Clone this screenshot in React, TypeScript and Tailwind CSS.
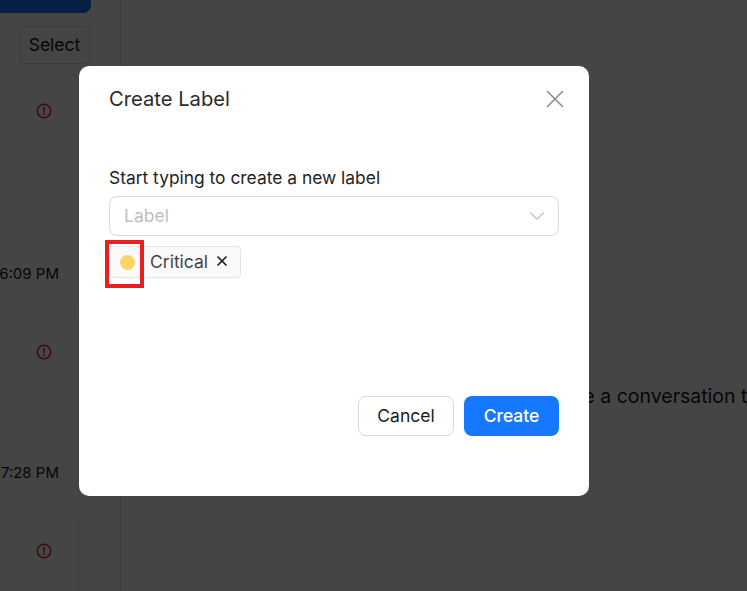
import { ChevronDown, X } from "lucide-react";

function AlertIcon() {
  return (
    <svg width="16" height="16" viewBox="0 0 16 16" fill="none" className="text-[#dc2626]" aria-hidden>
      <circle cx="8" cy="8" r="6.75" stroke="currentColor" strokeWidth="1.5" />
      <path d="M8 4.5v4.2" stroke="currentColor" strokeWidth="1.6" strokeLinecap="round" />
      <circle cx="8" cy="11.2" r="0.9" fill="currentColor" />
    </svg>
  );
}

function ConversationCard({ className, timeClass, time }: { className: string; timeClass?: string; time?: string }) {
  return (
    <div className={`-ml-5 w-[99px] shrink-0 rounded-md border border-[#e5e7eb] bg-white pr-[26px] ${className}`}>
      <div className="flex justify-end">
        <AlertIcon />
      </div>
      {time && (
        <p className={`-mr-[7px] whitespace-nowrap text-right text-[15px] leading-5 text-[#111827] ${timeClass}`}>
          {time}
        </p>
      )}
    </div>
  );
}

export default function App() {
  return (
    <div className="relative flex h-[591px] w-[747px] overflow-hidden bg-white font-['Inter',sans-serif]">
      <aside className="w-[121px] shrink-0 overflow-hidden border-r border-[#e5e7eb]">
        <div className="flex h-full w-[91px] flex-col border-r border-[#eeeeee]">
          <div className="-ml-5 -mt-7 h-[41px] w-[111px] shrink-0 rounded-lg bg-[#1677ff]" />
          <button className="ml-[19px] mt-[13px] h-[38px] w-[71px] shrink-0 rounded-md border border-[#d9d9d9] text-[17.5px] text-[#111827]">
            Select
          </button>
          <div className="mt-[11px] flex flex-col gap-[11px]">
            <ConversationCard className="h-[231px] pt-[27px]" timeClass="mt-[145px]" time="6:09 PM" />
            <ConversationCard className="h-[189px] pt-[26px]" timeClass="mt-[103px]" time="7:28 PM" />
            <ConversationCard className="h-[120px] pt-[25px]" />
          </div>
        </div>
      </aside>

      <main className="flex flex-1 items-center overflow-hidden pl-[328px] pt-[203px]">
        <p className="whitespace-nowrap text-[19.5px] text-[#111827]">Select or create a conversation to start</p>
      </main>

      <div className="absolute inset-0 bg-black/[0.73]" />

      <div className="absolute left-[79px] top-[66px] flex h-[430px] w-[510px] flex-col rounded-[10px] bg-white px-[30px] pt-[20px]">
        <div className="flex h-[26px] items-center justify-between">
          <h2 className="text-[20.2px] font-normal text-[#2b2b2b]">Create Label</h2>
          <X size={30} strokeWidth={1.2} className="-mr-[11px] text-[#8c8c8c]" />
        </div>

        <label className="mt-[54px] text-[17.4px] leading-6 text-[#1f1f1f]">Start typing to create a new label</label>
        <div className="mt-[6px] flex h-10 items-center justify-between rounded-lg border border-[#d9d9d9] pl-[14px] pr-[8px]">
          <span className="text-[17.5px] text-[#bfbfbf]">Label</span>
          <ChevronDown size={26} strokeWidth={1} className="text-[#bfbfbf]" />
        </div>

        <div className="mt-[10px] flex h-8 w-[132px] items-center rounded border border-[#e5e5e5] bg-[#fafafa] pl-[10px]">
          <span className="h-[15px] w-[15px] rounded-full bg-[#ffd666]" />
          <span className="ml-[15px] text-[17.5px] text-[#434343]">Critical</span>
          <X size={16} strokeWidth={2.6} className="-mt-[2px] ml-[6px] text-[#1f1f1f]" />
        </div>

        <div className="mt-[118px] flex justify-end gap-[10px]">
          <button className="h-10 w-[96px] rounded-lg border border-[#d9d9d9] bg-white text-[17.5px] text-[#1a1a1a]">Cancel</button>
          <button className="h-10 w-[95px] rounded-lg bg-[#1677ff] text-[17.5px] font-medium text-white">Create</button>
        </div>
      </div>

      {/* red annotation box from the screenshot */}
      <div className="absolute left-[105px] top-[240px] h-[48px] w-[39px] border-4 border-[#e8201f]" />
    </div>
  );
}
